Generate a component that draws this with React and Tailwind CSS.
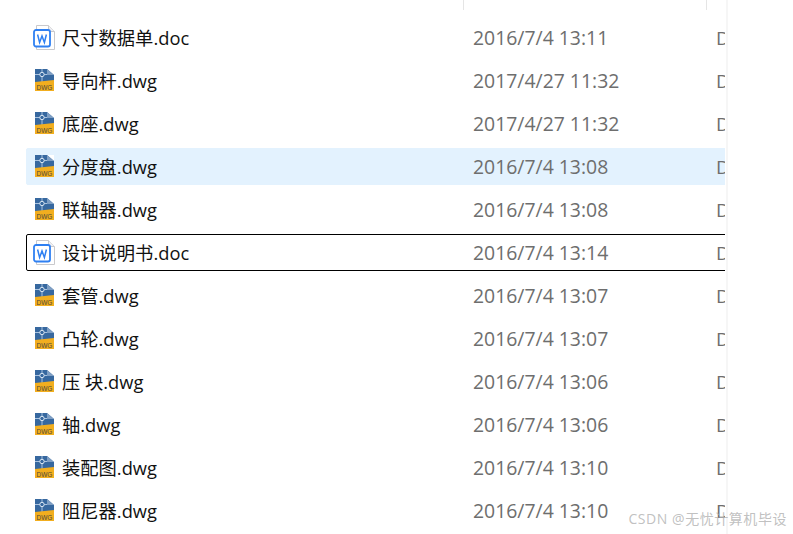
import React from 'react';

const files = [
  { name: '尺寸数据单.doc', date: '2016/7/4 13:11', kind: 'doc' },
  { name: '导向杆.dwg', date: '2017/4/27 11:32', kind: 'dwg' },
  { name: '底座.dwg', date: '2017/4/27 11:32', kind: 'dwg' },
  { name: '分度盘.dwg', date: '2016/7/4 13:08', kind: 'dwg', selected: true },
  { name: '联轴器.dwg', date: '2016/7/4 13:08', kind: 'dwg' },
  { name: '设计说明书.doc', date: '2016/7/4 13:14', kind: 'doc', focused: true },
  { name: '套管.dwg', date: '2016/7/4 13:07', kind: 'dwg' },
  { name: '凸轮.dwg', date: '2016/7/4 13:07', kind: 'dwg' },
  { name: '压 块.dwg', date: '2016/7/4 13:06', kind: 'dwg' },
  { name: '轴.dwg', date: '2016/7/4 13:06', kind: 'dwg' },
  { name: '装配图.dwg', date: '2016/7/4 13:10', kind: 'dwg' },
  { name: '阻尼器.dwg', date: '2016/7/4 13:10', kind: 'dwg' },
];

function DocIcon() {
  return (
    <svg width="24" height="26" viewBox="0 0 24 26" className="shrink-0">
      <path d="M3.5 0.5H15.5L21.5 6.5V24.5H3.5Z" fill="#fff" stroke="#c9c9cc" strokeWidth="1" />
      <path d="M15.5 0.5V6.5H21.5" fill="#f0f0f2" stroke="#c9c9cc" strokeWidth="1" />
      <rect x="1" y="5" width="16" height="16.5" rx="2" fill="#fff" stroke="#2f80f2" strokeWidth="1.8" />
      <path d="M4.6 9.5L6.6 17.5L9 11L11.4 17.5L13.4 9.5" fill="none" stroke="#2f80f2" strokeWidth="1.5" />
    </svg>
  );
}

function DwgIcon() {
  return (
    <svg width="24" height="24" viewBox="0 0 24 24" className="shrink-0 -mt-[1px]">
      <rect x="2" y="0" width="19" height="15" fill="#37689f" />
      <path d="M14 0H21V6Z" fill="#fff" />
      <path d="M14 0L21 6H14Z" fill="#7f9fc4" />
      <path d="M2 5.5H14M9 0V15" stroke="#a9c3e0" strokeWidth="1" />
      <circle cx="9" cy="5.5" r="2.2" fill="#37689f" stroke="#dbe7f3" strokeWidth="1" />
      <path d="M2 13L21 11V22H2Z" fill="#f2ae1f" />
      <text x="3.5" y="20.5" fontSize="6.5" fill="#4f4a3c" fontFamily="'Liberation Sans', sans-serif">
        DWG
      </text>
    </svg>
  );
}

function FileRow({ file }) {
  return (
    <div
      className={`flex h-[37px] w-[760px] items-center rounded-[2px] border pl-[6px] pt-[1px] ${
        file.focused ? 'border-black' : file.selected ? 'border-[#e3f2fe] bg-[#e3f2fe]' : 'border-transparent'
      }`}
    >
      <div className="flex w-[29px] shrink-0">{file.kind === 'doc' ? <DocIcon /> : <DwgIcon />}</div>
      <div className="w-[411px] shrink-0 whitespace-pre text-[18.3px] text-[#111]">{file.name}</div>
      <div className="w-[243px] shrink-0 text-[19.4px] text-[#6e6e6e]">{file.date}</div>
      <div className="text-[19px] text-[#6e6e6e]">Drawing</div>
    </div>
  );
}

export default function App() {
  return (
    <div
      className="relative h-[534px] w-[793px] overflow-hidden bg-white"
      style={{ fontFamily: '"Open Sans", "Noto Sans CJK SC", sans-serif' }}
    >
      <div className="h-full w-[728px] border-r-2 border-[#f6f6f6]">
        <div className="h-full w-[725px] overflow-hidden">
          {/* column header stubs */}
          <div className="flex h-[10px]">
            <div className="w-[464px] border-r border-[#e5e5e5]" />
            <div className="w-[243px] border-r border-[#e5e5e5]" />
          </div>
          <div className="flex flex-col gap-[6px] pl-[26px] pt-[9px]">
            {files.map((file) => (
              <FileRow key={file.name} file={file} />
            ))}
          </div>
        </div>
      </div>
      {/* watermark */}
      <div className="absolute bottom-[5px] right-[6px] text-[14px] tracking-[0.55px] text-[#b0b0b0]/80">
        CSDN @无忧计算机毕设
      </div>
    </div>
  );
}
